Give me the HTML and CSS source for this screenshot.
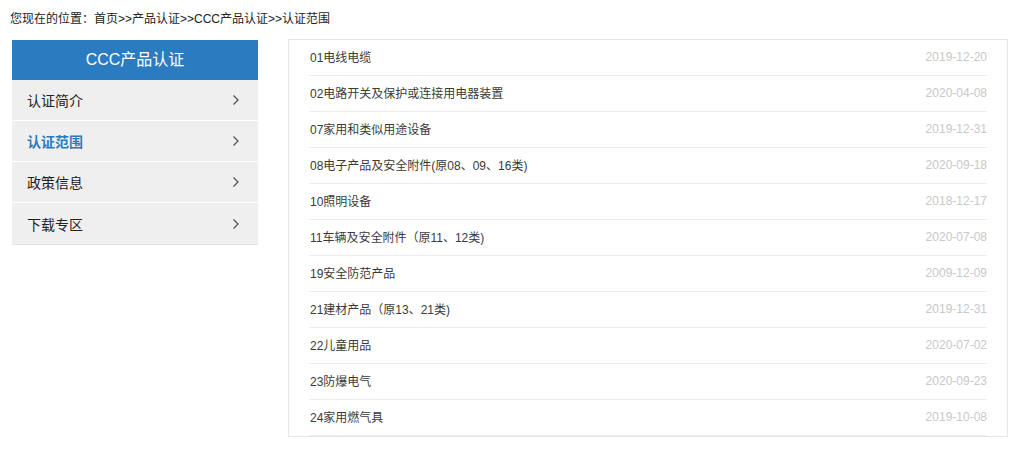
FILE: index.html
```html
<!DOCTYPE html>
<html lang="zh">
<head>
<meta charset="utf-8">
<link rel="stylesheet" href="styles.css">
</head>
<body>
<div class="crumb">您现在的位置：首页&gt;&gt;产品认证&gt;&gt;CCC产品认证&gt;&gt;认证范围</div>
<div class="main">
  <aside class="side">
    <div class="side-title">CCC产品认证</div>
    <a class="side-item">认证简介<span class="arr"><svg width="8" height="12" viewBox="0 0 8 12"><path d="M1.5 1.5 L6 6 L1.5 10.5" fill="none" stroke="#555" stroke-width="1.3"/></svg></span></a>
    <a class="side-item active">认证范围<span class="arr"><svg width="8" height="12" viewBox="0 0 8 12"><path d="M1.5 1.5 L6 6 L1.5 10.5" fill="none" stroke="#555" stroke-width="1.3"/></svg></span></a>
    <a class="side-item">政策信息<span class="arr"><svg width="8" height="12" viewBox="0 0 8 12"><path d="M1.5 1.5 L6 6 L1.5 10.5" fill="none" stroke="#555" stroke-width="1.3"/></svg></span></a>
    <a class="side-item">下载专区<span class="arr"><svg width="8" height="12" viewBox="0 0 8 12"><path d="M1.5 1.5 L6 6 L1.5 10.5" fill="none" stroke="#555" stroke-width="1.3"/></svg></span></a>
  </aside>
  <section class="list">
    <div class="row"><span class="t">01电线电缆</span><span class="d">2019-12-20</span></div>
    <div class="row"><span class="t">02电路开关及保护或连接用电器装置</span><span class="d">2020-04-08</span></div>
    <div class="row"><span class="t">07家用和类似用途设备</span><span class="d">2019-12-31</span></div>
    <div class="row"><span class="t">08电子产品及安全附件(原08、09、16类)</span><span class="d">2020-09-18</span></div>
    <div class="row"><span class="t">10照明设备</span><span class="d">2018-12-17</span></div>
    <div class="row"><span class="t">11车辆及安全附件（原11、12类)</span><span class="d">2020-07-08</span></div>
    <div class="row"><span class="t">19安全防范产品</span><span class="d">2009-12-09</span></div>
    <div class="row"><span class="t">21建材产品（原13、21类)</span><span class="d">2019-12-31</span></div>
    <div class="row"><span class="t">22儿童用品</span><span class="d">2020-07-02</span></div>
    <div class="row"><span class="t">23防爆电气</span><span class="d">2020-09-23</span></div>
    <div class="row"><span class="t">24家用燃气具</span><span class="d">2019-10-08</span></div>
  </section>
</div>
</body>
</html>
```
FILE: styles.css
```css
* { box-sizing: border-box; }
body {
  margin: 0;
  background: #fff;
  font-family: "Liberation Sans", Arial, "Noto Sans CJK SC", sans-serif;
  color: #333;
}
.crumb {
  font-size: 12px;
  color: #222;
  padding: 11px 0 0 10px;
  height: 39px;
  line-height: 16px;
}
.main {
  display: flex;
  align-items: flex-start;
}
.side {
  width: 246px;
  margin-left: 12px;
  margin-top: 1px;
  background: #f0eff0;
  border-bottom: 1px solid #e2e2e2;
}
.side-title {
  height: 40px;
  background: #2a7bbf;
  color: #fff;
  font-size: 16px;
  text-align: center;
  line-height: 40px;
}
.side-item {
  display: flex;
  justify-content: space-between;
  align-items: center;
  height: 41px;
  padding: 0 18px 0 15px;
  font-size: 14px;
  color: #222;
  border-bottom: 1px solid #fff;
}
.side-item:last-child { border-bottom: none; }
.side-item.active { color: #2a7bbf; font-weight: bold; }
.arr { display: flex; align-items: center; }
.list {
  margin-left: 30px;
  width: 720px;
  border: 1px solid #e6e6e6;
  padding: 0 20px;
}
.row {
  display: flex;
  justify-content: space-between;
  align-items: center;
  height: 36px;
  padding-bottom: 2px;
  border-bottom: 1px solid #ececec;
  font-size: 12px;
}
.row .t { color: #3a3a3a; padding-left: 1px; }
.row .d { color: #c8c8c8; }
```
